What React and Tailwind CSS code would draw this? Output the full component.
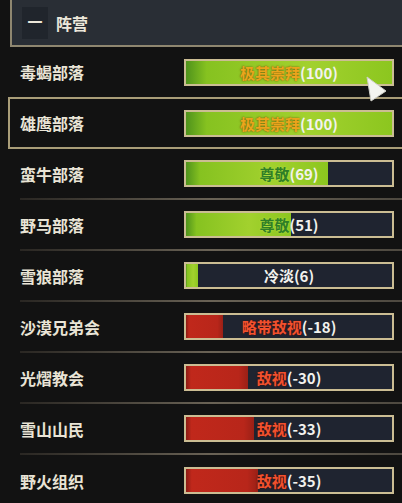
// 阵营声望面板
import React from 'react';

const FACTIONS = [
  { name: '毒蝎部落', level: '极其崇拜', value: 100, tone: 'gold' },
  { name: '雄鹰部落', level: '极其崇拜', value: 100, tone: 'gold', selected: true },
  { name: '蛮牛部落', level: '尊敬', value: 69, tone: 'green' },
  { name: '野马部落', level: '尊敬', value: 51, tone: 'green' },
  { name: '雪狼部落', level: '冷淡', value: 6, tone: 'white' },
  { name: '沙漠兄弟会', level: '略带敌视', value: -18, tone: 'red' },
  { name: '光熠教会', level: '敌视', value: -30, tone: 'red' },
  { name: '雪山山民', level: '敌视', value: -33, tone: 'red' },
  { name: '野火组织', level: '敌视', value: -35, tone: 'red' },
];

const LEVEL_COLOR = {
  gold: 'text-[#eaa51c] [text-shadow:0_0_2px_#6a4a08]',
  green: 'text-[#2f7f26] [text-shadow:0_0_2px_#b9e04a]',
  white: 'text-[#f2f2ee]',
  red: 'text-[#f2512e] [text-shadow:0_0_2px_#4a0c06]',
};

function ReputationBar({ level, value, tone }) {
  const pct = Math.min(100, Math.abs(value));
  const fill =
    value < 0
      ? 'bg-[linear-gradient(90deg,#8a1c14_0%,#c0281b_8%,#b8261a_85%,#9a2016_100%)]'
      : 'bg-[linear-gradient(90deg,#4f931c_0%,#86c220_10%,#a2d12e_60%,#8cc61f_100%)]';

  return (
    <div className="relative w-[210px] h-[27px] border-2 border-[#cbbd93] bg-[#1f2430]">
      <div className={`h-full ${fill}`} style={{ width: `${pct}%` }} />
      <div className="absolute inset-0 flex items-center justify-center text-[15px] font-bold leading-none">
        <span className={LEVEL_COLOR[tone]}>{level}</span>
        <span className="text-[#f2f2ee]">({value})</span>
      </div>
    </div>
  );
}

function FactionRow({ faction, separator }) {
  return (
    <div className="flex flex-col h-[51px]">
      <div className="flex-1 flex items-center">
        <span className="w-[184px] pl-[20px] text-[16px] font-bold text-[#e9e4d6]">{faction.name}</span>
        <ReputationBar {...faction} />
      </div>
      {separator && (
        <div className="h-[2px] ml-[20px] bg-gradient-to-r from-[#2a2723] via-[#6a6356] to-[#4e4940]" />
      )}
    </div>
  );
}

export default function App() {
  const [first, selected, ...rest] = FACTIONS;

  return (
    <div className="relative w-[402px] h-[503px] overflow-hidden bg-[#121212] font-['Noto_Sans_CJK_SC','Noto_Sans',sans-serif]">
      {/* 标题栏 */}
      <div className="ml-[10px] h-[47px] flex items-center gap-[8px] pl-[10px] border-l-2 border-b-2 border-[#8f8770] bg-[#292e35]">
        <div className="w-[26px] h-[32px] flex items-center justify-center bg-[#20252c] text-[#ece7da] font-bold text-[15px]">一</div>
        <span className="text-[16px] font-bold text-[#ece7da]">阵营</span>
      </div>

      <div className="flex items-center h-[50px]">
        <span className="w-[184px] pl-[20px] text-[16px] font-bold text-[#e9e4d6]">{first.name}</span>
        <ReputationBar {...first} />
      </div>

      {/* 选中行 */}
      <div className="ml-[8px] h-[52px] flex items-center border-l-2 border-y-2 border-[#a99d78] bg-[#121212]">
        <span className="w-[174px] pl-[10px] text-[16px] font-bold text-[#e9e4d6]">{selected.name}</span>
        <ReputationBar {...selected} />
      </div>

      {rest.map((f, i) => (
        <FactionRow key={f.name} faction={f} separator={i < rest.length - 1} />
      ))}

      {/* 鼠标指针 */}
      <svg className="absolute left-[366px] top-[76px]" width="22" height="26" viewBox="0 0 22 26">
        <path d="M1 1 L20 15 L5 25 Z" fill="#f4f4f0" stroke="#cfcfc8" strokeWidth="1" strokeLinejoin="round" />
      </svg>
    </div>
  );
}
